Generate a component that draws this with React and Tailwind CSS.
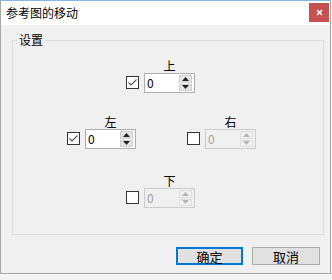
import React from "react";

const font = { fontFamily: '"Noto Sans CJK SC", "Noto Sans", sans-serif' };

function Arrow({ up, disabled }) {
  return (
    <svg width="7" height="4" viewBox="0 0 7 4">
      <polygon
        points={up ? "3.5,0 7,4 0,4" : "0,0 7,0 3.5,4"}
        fill={disabled ? "#b5b5b5" : "#222"}
      />
    </svg>
  );
}

function Spin({ disabled }) {
  return (
    <div
      className={`w-[51px] h-[20px] border flex items-center ${
        disabled ? "border-[#cccccc] bg-[#f0f0f0]" : "border-[#adadad] bg-white"
      }`}
    >
      <span
        className={`flex-1 pl-[2px] text-[12px] leading-none ${
          disabled ? "text-[#a0a0a0]" : "text-black"
        }`}
      >
        0
      </span>
      <div className="w-[13px] h-[16px] mr-[2px] flex flex-col gap-[1px]">
        <div
          className={`flex-1 flex items-center justify-center border ${
            disabled ? "border-[#e0e0e0] bg-[#f0f0f0]" : "border-[#cfcfcf] bg-[#e5e5e5]"
          }`}
        >
          <Arrow up disabled={disabled} />
        </div>
        <div
          className={`flex-1 flex items-center justify-center border ${
            disabled ? "border-[#e0e0e0] bg-[#f0f0f0]" : "border-[#cfcfcf] bg-[#e5e5e5]"
          }`}
        >
          <Arrow disabled={disabled} />
        </div>
      </div>
    </div>
  );
}

function Check({ checked }) {
  return (
    <div className="w-[13px] h-[13px] mt-[3px] border border-[#333333] bg-white flex items-center justify-center">
      {checked && (
        <svg width="11" height="11" viewBox="0 0 11 11">
          <path d="M1.5 5.5 L4 8 L9.5 2.5" fill="none" stroke="#555" strokeWidth="1.1" />
        </svg>
      )}
    </div>
  );
}

function Item({ label, checked, disabled }) {
  return (
    <div className="grid grid-cols-[13px_51px] gap-x-[5px]">
      <div />
      <div className="h-[15px] leading-[15px] text-center text-[12px] text-black">{label}</div>
      <Check checked={checked} />
      <Spin disabled={disabled} />
    </div>
  );
}

export default function App() {
  return (
    <div className="w-[332px] h-[280px] bg-[#f4f4f4] overflow-hidden" style={font}>
      <div className="w-[331px] h-[274px] border border-[#a8a8a8] border-t-[#8ab6e6] bg-[#f0f0f0] flex flex-col">
        {/* title bar */}
        <div className="h-[24px] bg-white flex items-start justify-between">
          <span className="pl-[5px] pt-[5px] text-[12px] leading-[14px] text-black">参考图的移动</span>
          <button className="w-[20px] h-[19px] mt-[2px] mr-[1px] bg-[#c75050] flex items-center justify-center">
            <svg width="7" height="7" viewBox="0 0 7 7">
              <path d="M1 1 L6 6 M6 1 L1 6" stroke="white" strokeWidth="1.6" />
            </svg>
          </button>
        </div>

        {/* body */}
        <div className="flex-1 pl-[11px] pt-[7px]">
          <fieldset className="w-[312px] h-[203px] border border-[#dcdcdc]">
            <legend className="ml-[4px] px-[2px] text-[12px] leading-[16px] text-black">设置</legend>
            <div className="flex flex-col items-start">
              <div className="ml-[113px] mt-[10px]">
                <Item label="上" checked />
              </div>
              <div className="ml-[54px] mt-[21px] flex gap-[51px]">
                <Item label="左" checked />
                <Item label="右" disabled />
              </div>
              <div className="ml-[113px] mt-[24px]">
                <Item label="下" disabled />
              </div>
            </div>
          </fieldset>

          <div className="ml-[164px] mt-[12px] flex gap-[9px]">
            <button className="w-[67px] h-[18px] border border-[#0078d7] shadow-[inset_0_0_0_1px_#0078d7] bg-[#e1e1e1] text-[13px] leading-none text-black">
              确定
            </button>
            <button className="w-[68px] h-[18px] border border-[#adadad] bg-[#e1e1e1] text-[13px] leading-none text-black">
              取消
            </button>
          </div>
        </div>
      </div>
    </div>
  );
}
